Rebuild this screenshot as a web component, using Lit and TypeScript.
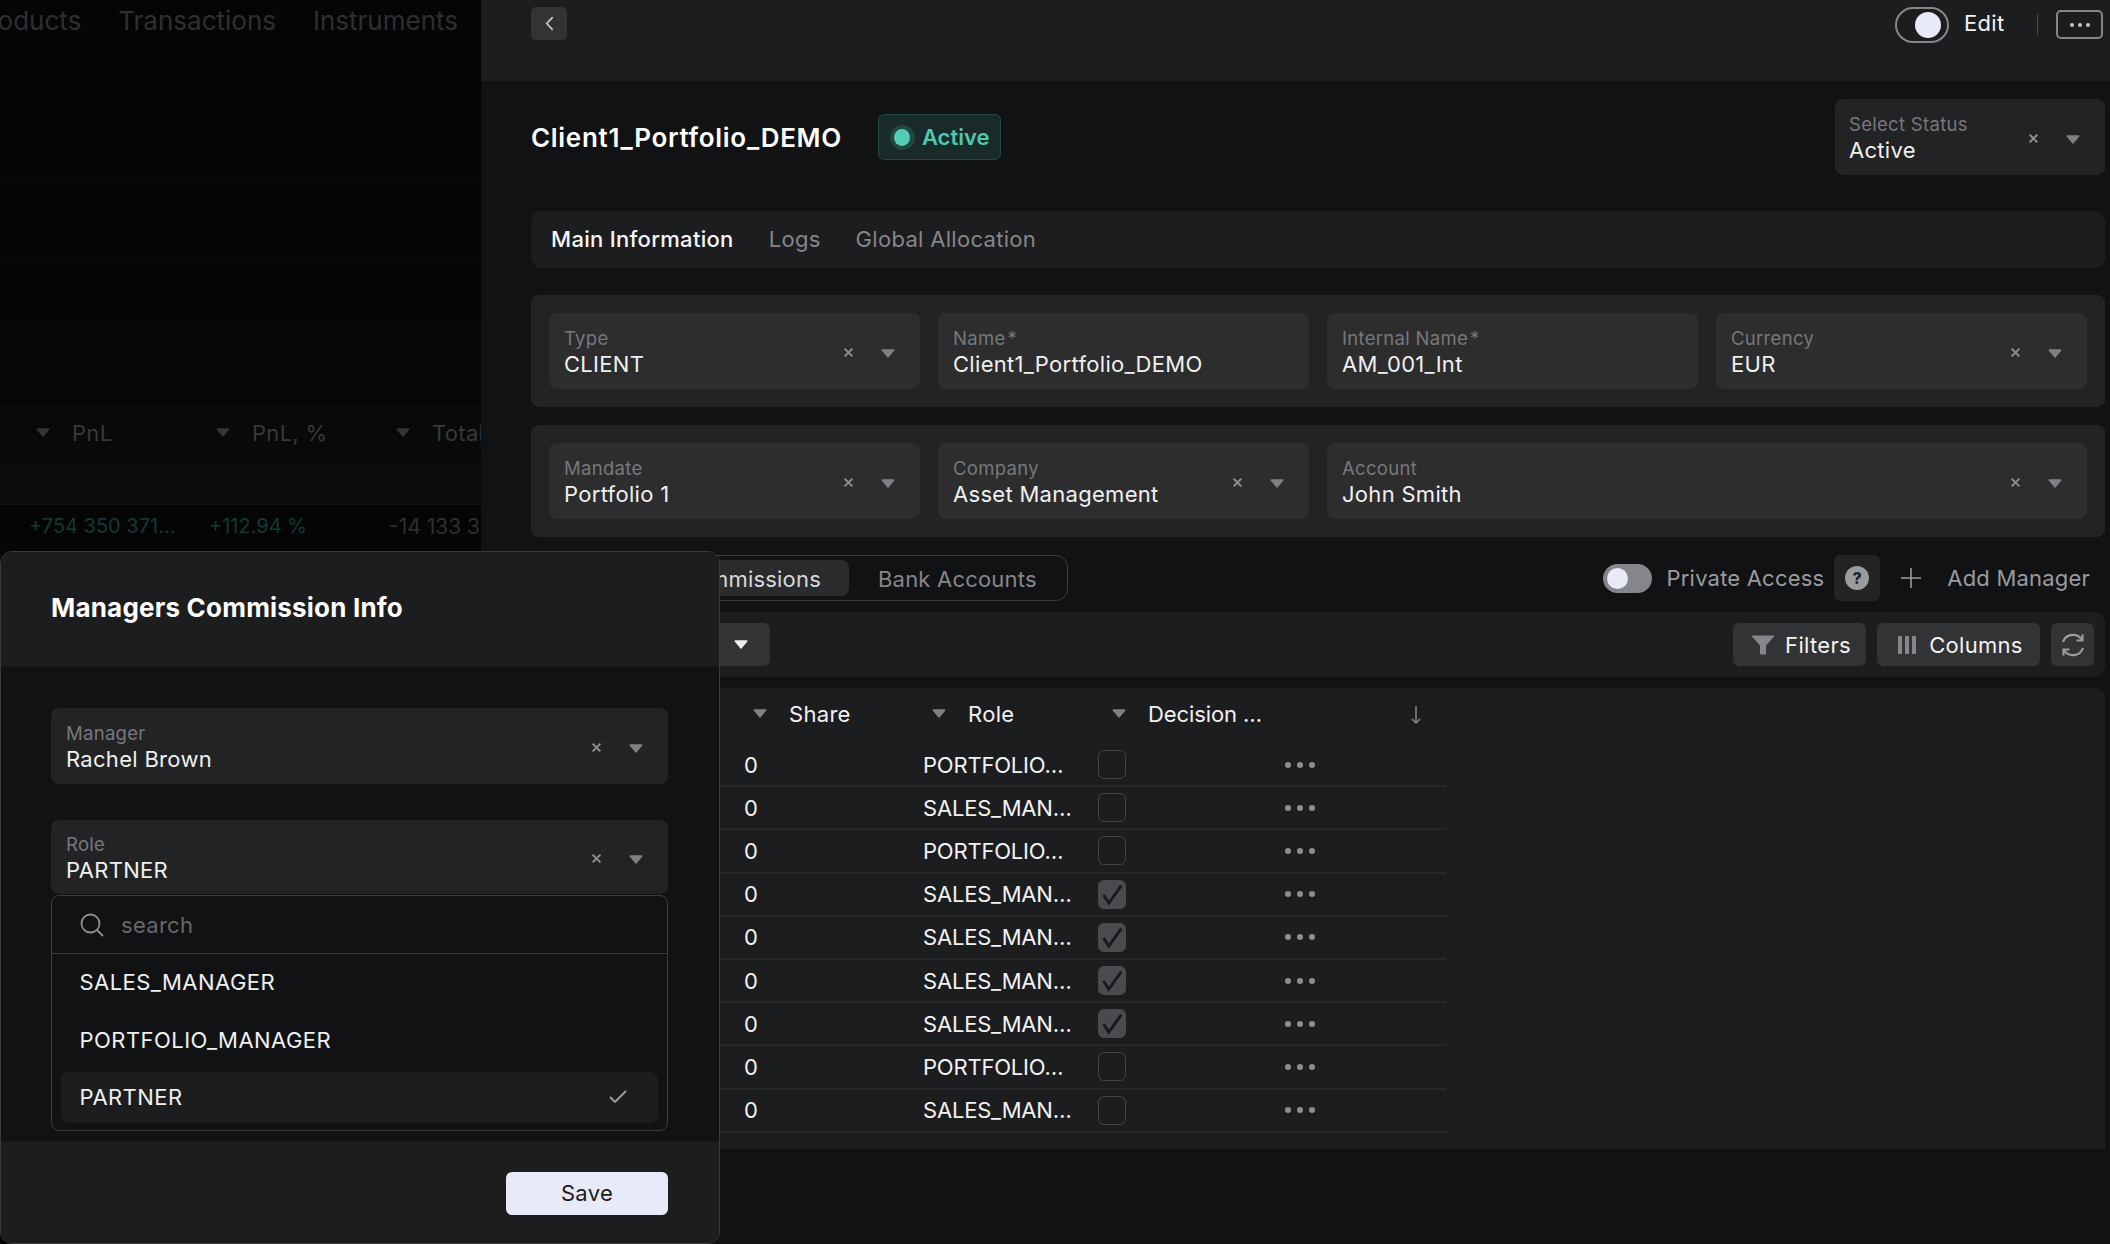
import { LitElement, css, html, nothing } from 'lit';
import { customElement } from 'lit/decorators.js';

const caret = (cls = '') => html`<svg class="caret ${cls}" viewBox="0 0 14 9"><path d="M1.2 1h11.6L7 8z" fill="currentColor" stroke="currentColor" stroke-width="1.4" stroke-linejoin="round"/></svg>`;
const clear = html`<svg class="clear" viewBox="0 0 10 10"><path d="M1.500 1.500l7 7M8.500 1.500l-7 7" stroke="currentColor" stroke-width="1.800" fill="none"/></svg>`;

const rows = [
    ['PORTFOLIO…', false],
    ['SALES_MAN…', false],
    ['PORTFOLIO…', false],
    ['SALES_MAN…', true],
    ['SALES_MAN…', true],
    ['SALES_MAN…', true],
    ['SALES_MAN…', true],
    ['PORTFOLIO…', false],
    ['SALES_MAN…', false],
] as [string, boolean][];

@customElement('app-root')
export class AppRoot extends LitElement {
    field(label: string, value: string, select = true, cls = '') {
        return html`
      <div class="field ${cls}">
        <div class="field-text">
          <span class="field-label">${label}</span>
          <span class="field-value">${value}</span>
        </div>
        ${select ? html`<div class="field-icons">${clear}${caret()}</div>` : nothing}
      </div>
    `;
    }

    renderBackdrop() {
        return html`
      <aside class="backdrop">
        <nav class="back-nav"><span>Products</span><span>Transactions</span><span>Instruments</span></nav>
        <div class="back-band tall"></div>
        <div class="back-band mid"></div>
        <div class="back-band low"></div>
        <div class="back-head">
          <div class="back-col">${caret()}<span>PnL</span></div>
          <div class="back-col">${caret()}<span>PnL, %</span></div>
          <div class="back-col">${caret()}<span>Total</span></div>
        </div>
        <div class="back-gap"></div>
        <div class="back-row">
          <span class="green first">+754 350 371…</span>
          <span class="green second">+112.94 %</span>
          <span class="third">-14 133 3</span>
        </div>
      </aside>
    `;
    }

    renderTable() {
        return html`
      <section class="table">
        <div class="thead">
          <div class="th share">${caret()}<span>Share</span></div>
          <div class="th role">${caret()}<span>Role</span></div>
          <div class="th decision">${caret()}<span>Decision …</span></div>
          <svg class="sort" viewBox="0 0 12 20"><path d="M6 1v17M2 14l4 4 4-4" stroke="currentColor" stroke-width="1.500" fill="none"/></svg>
        </div>
        ${rows.map(([role, checked]) => html`
          <div class="tr">
            <span class="td-share">0</span>
            <span class="td-role">${role}</span>
            <span class="check ${checked ? 'on' : ''}">
              ${checked ? html`<svg viewBox="0 0 28 29"><path d="M5 15l5.500 9L24 5" stroke="#17181a" stroke-width="3" fill="none"/></svg>` : nothing}
            </span>
            <span class="dots"><i></i><i></i><i></i></span>
          </div>
        `)}
      </section>
    `;
    }

    renderPanel() {
        return html`
      <main class="panel">
        <header class="top">
          <button class="back-btn">
            <svg viewBox="0 0 12 18" width="11" height="17"><path d="M9.500 2L3 9l6.500 7" stroke="#c9cacd" stroke-width="1.800" fill="none"/></svg>
          </button>
          <div class="top-right">
            <span class="edit-toggle"><i></i></span>
            <span class="edit-label">Edit</span>
            <span class="divider"></span>
            <button class="more"><i></i><i></i><i></i></button>
          </div>
        </header>
        <div class="body">
          <div class="title-row">
            <h1>Client1_Portfolio_DEMO</h1>
            <span class="badge"><span class="halo"><i></i></span>Active</span>
            ${this.field('Select Status', 'Active', true, 'status')}
          </div>
          <div class="tabs">
            <span class="on">Main Information</span><span>Logs</span><span>Global Allocation</span>
          </div>
          <div class="form-section">
            ${this.field('Type', 'CLIENT')}
            ${this.field('Name\u200a*', 'Client1_Portfolio_DEMO', false)}
            ${this.field('Internal Name\u200a*', 'AM_001_Int', false)}
            ${this.field('Currency', 'EUR')}
          </div>
          <div class="form-section">
            ${this.field('Mandate', 'Portfolio 1')}
            ${this.field('Company', 'Asset Management')}
            ${this.field('Account', 'John Smith', true, 'wide')}
          </div>
          <div class="sub-row">
            <div class="pill-tabs">
              <span class="pill on">Commissions</span><span class="pill">Bank Accounts</span>
            </div>
            <div class="access">
              <span class="access-toggle"><i></i></span>
              <span class="access-label">Private Access</span>
              <button class="help"><span>?</span></button>
              <svg class="plus" viewBox="0 0 20 20"><path d="M10 0v20M0 10h20" stroke="currentColor" stroke-width="1.600"/></svg>
              <span class="add">Add Manager</span>
            </div>
          </div>
          <div class="toolbar">
            <button class="tool view-btn">${caret('bright')}</button>
            <button class="tool filters">
              <svg viewBox="0 0 24 20" width="24" height="20"><path d="M1 1h22l-8.500 9.500V19l-5 0v-8.500z" fill="#85868b" stroke="#85868b" stroke-linejoin="round"/></svg>
              Filters
            </button>
            <button class="tool columns">
              <svg viewBox="0 0 18 20" width="18" height="20"><path d="M0 1h4v18H0zM7 1h4v18H7zM14 1h4v18h-4z" fill="#85868b"/></svg>
              Columns
            </button>
            <button class="tool refresh">
              <svg viewBox="0 0 26 26" width="26" height="26" fill="none" stroke="#9c9da1" stroke-width="2.200"><path d="M3 10A10.500 10.500 0 0 1 22 8M23 16A10.500 10.500 0 0 1 4 18"/><path d="M22.500 2.500V8.500H16.500M3.500 23.500V17.500H9.500"/></svg>
            </button>
          </div>
          ${this.renderTable()}
        </div>
      </main>
    `;
    }

    renderModal() {
        return html`
      <div class="modal">
        <div class="modal-head">Managers Commission Info</div>
        <div class="modal-body">
          ${this.field('Manager', 'Rachel Brown', true, 'dim')}
          ${this.field('Role', 'PARTNER', true, 'dim role-field')}
          <div class="dropdown">
            <div class="search">
              <svg viewBox="0 0 24 24" width="24" height="24" fill="none" stroke="#8e8f93" stroke-width="1.800"><circle cx="10.500" cy="10.500" r="9"/><path d="M17 17l6 6"/></svg>
              <span>search</span>
            </div>
            <div class="option">SALES_MANAGER</div>
            <div class="option">PORTFOLIO_MANAGER</div>
            <div class="option picked">
              PARTNER
              <svg viewBox="0 0 18 14" width="18" height="14"><path d="M1 7l5 5L17 1" stroke="#a0a1a5" stroke-width="1.800" fill="none"/></svg>
            </div>
          </div>
        </div>
        <div class="modal-foot"><button class="save">Save</button></div>
      </div>
    `;
    }

    render() {
        return html`${this.renderBackdrop()}${this.renderPanel()}${this.renderModal()}`;
    }

    static styles = css`
    :host {
      display: flex;
      position: relative;
      width: 2110px;
      height: 1244px;
      overflow: hidden;
      background: #111213;
      color: #f2f2f3;
      font-family: Inter, 'Noto Sans', sans-serif;
      font-size: 22px;
      letter-spacing: 0.3px;
    }

    button {
      font: inherit;
      letter-spacing: inherit;
      color: inherit;
      border: 0;
      padding: 0;
    }

    .caret {
      width: 14px;
      height: 9px;
      color: #7f8084;
      flex: none;
    }

    .caret.bright {
      color: #eceded;
    }

    .clear {
      width: 11px;
      height: 11px;
      color: #8e8f93;
      flex: none;
    }

    /* page behind the side panel */
    .backdrop {
      width: 481px;
      flex: none;
      overflow: hidden;
      background: #050505;
      color: #2e2f31;
      font-size: 26px;
      letter-spacing: 0;
    }

    .back-nav {
      display: flex;
      justify-content: flex-end;
      gap: 37px;
      height: 180px;
      padding: 5px 23px 0 0;
      white-space: nowrap;
      box-sizing: border-box;
    }

    .back-nav span {
      flex: none;
    }

    .back-band {
      box-sizing: border-box;
      border-top: 1px solid #070707;
    }

    .back-band.tall {
      height: 78px;
    }

    .back-band.mid {
      height: 64px;
    }

    .back-band.low {
      height: 83px;
      background: #060606;
    }

    .back-head {
      display: flex;
      height: 57px;
      box-sizing: border-box;
      align-items: center;
      padding: 0 0 2px 36px;
      background: #090909;
      font-size: 22px;
      letter-spacing: 0.3px;
      color: #38393b;
    }

    .back-head .caret {
      color: #333436;
    }

    .back-col {
      display: flex;
      align-items: center;
      gap: 22px;
      width: 180px;
      flex: none;
      white-space: nowrap;
    }

    .back-gap {
      height: 42px;
      background: #0c0c0d;
    }

    .back-row {
      display: flex;
      height: 42px;
      align-items: center;
      border-top: 1px solid #111;
      font-size: 20px;
      white-space: nowrap;
    }

    .back-row .green {
      color: #123a33;
    }

    .back-row .first {
      margin-left: 29px;
      width: 180px;
      flex: none;
    }

    .back-row .second {
      width: 180px;
      flex: none;
    }

    .back-row .third {
      font-size: 21px;
    }

    /* side panel */
    .panel {
      flex: 1;
      min-width: 0;
      display: flex;
      flex-direction: column;
    }

    .top {
      height: 81px;
      flex: none;
      box-sizing: border-box;
      padding: 7px 7px 0 50px;
      background: #1c1d1f;
      display: flex;
      justify-content: space-between;
      align-items: flex-start;
    }

    .back-btn {
      width: 36px;
      height: 33px;
      border-radius: 5px;
      background: #323335;
      display: flex;
      align-items: center;
      justify-content: center;
    }

    .top-right {
      display: flex;
      align-items: center;
      height: 35px;
    }

    .edit-toggle {
      width: 54px;
      height: 36px;
      box-sizing: border-box;
      border: 2px solid #85868b;
      border-radius: 18px;
      display: flex;
      align-items: center;
      justify-content: flex-end;
      padding-right: 6px;
    }

    .edit-toggle i {
      width: 26px;
      height: 26px;
      border-radius: 50%;
      background: #e8eaf8;
    }

    .edit-label {
      margin-left: 15px;
      width: 73px;
      padding-bottom: 3px;
    }

    .divider {
      width: 1px;
      height: 21px;
      background: #4a4b4e;
      margin-right: 18px;
    }

    .more {
      width: 47px;
      height: 29px;
      box-sizing: border-box;
      border: 2px solid #85868b;
      border-radius: 5px;
      background: none;
      display: flex;
      align-items: center;
      justify-content: center;
      gap: 4px;
    }

    .more i {
      width: 4px;
      height: 4px;
      border-radius: 50%;
      background: #c4c5c8;
    }

    .body {
      padding: 18px 5px 0 50px;
      display: flex;
      flex-direction: column;
    }

    .title-row {
      display: flex;
      align-items: center;
      height: 76px;
    }

    h1 {
      margin: 0;
      font-size: 26px;
      font-weight: 600;
      letter-spacing: 0.7px;
      color: #fff;
    }

    .badge {
      margin-left: 36px;
      height: 46px;
      width: 123px;
      box-sizing: border-box;
      border: 1px solid #21473f;
      border-radius: 6px;
      background: #192b29;
      color: #4fc8b0;
      font-weight: 600;
      letter-spacing: 0;
      display: flex;
      align-items: center;
      gap: 7px;
      padding-left: 11px;
    }

    .halo {
      width: 25px;
      height: 25px;
      border-radius: 50%;
      background: #234640;
      display: flex;
      align-items: center;
      justify-content: center;
    }

    .halo i {
      width: 16px;
      height: 17px;
      border-radius: 50%;
      background: #55cdb5;
    }

    .field {
      height: 76px;
      box-sizing: border-box;
      padding: 2px 15px 0;
      border-radius: 8px;
      background: #2d2d2e;
      display: flex;
      align-items: center;
      justify-content: space-between;
      min-width: 0;
    }

    .field-text {
      display: flex;
      flex-direction: column;
      gap: 2px;
      white-space: nowrap;
    }

    .field-label {
      font-size: 18.5px;
      line-height: 22px;
      color: #77787c;
    }

    .field-value {
      line-height: 26px;
      color: #f0f0f1;
    }

    .field-icons {
      display: flex;
      align-items: center;
      gap: 27px;
      padding: 3px 10px 0 0;
    }

    .field-icons .clear {
      margin-top: -3px;
    }

    .field.status {
      margin-left: auto;
      width: 270px;
      padding-left: 14px;
      background: #222324;
    }

    .form-section {
      display: grid;
      grid-template-columns: repeat(4, 1fr);
      gap: 18px;
      padding: 18px;
      background: #222324;
      border-radius: 8px;
      margin-bottom: 18px;
    }

    .field.wide {
      grid-column: span 2;
    }

    .tabs {
      margin-top: 36px;
      margin-bottom: 27px;
      height: 57px;
      box-sizing: border-box;
      padding: 0 0 2px 20px;
      background: #1c1d1f;
      border-radius: 10px;
      display: flex;
      align-items: center;
      gap: 35px;
      color: #85868a;
    }

    .tabs .on {
      color: #f6f6f7;
      font-weight: 500;
    }

    .sub-row {
      display: flex;
      justify-content: space-between;
      align-items: center;
      height: 46px;
    }

    .pill-tabs {
      width: 537px;
      height: 46px;
      box-sizing: border-box;
      border: 1px solid #3b3c3f;
      border-radius: 12px;
      display: flex;
      align-items: center;
      padding: 0 4px;
      letter-spacing: 0.2px;
    }

    .pill {
      height: 36px;
      box-sizing: border-box;
      padding: 1px 0 0 29px;
      display: flex;
      align-items: center;
      justify-content: flex-end;
      color: #85868a;
      white-space: nowrap;
    }

    .pill.on {
      width: 313px;
      padding: 1px 28px 0 0;
      border-radius: 8px;
      background: #2a2b2c;
      color: #d8d9da;
    }

    .access {
      display: flex;
      align-items: center;
      height: 46px;
      padding-right: 15px;
      color: #9a9b9f;
      letter-spacing: 0.2px;
    }

    .access-toggle {
      width: 49px;
      height: 29px;
      border-radius: 15px;
      background: #85868b;
      display: flex;
      align-items: center;
      padding-left: 4px;
      box-sizing: border-box;
    }

    .access-toggle i {
      width: 21px;
      height: 21px;
      border-radius: 50%;
      background: #e8eaf8;
    }

    .access-label {
      margin: 0 10px 0 15px;
    }

    .help {
      width: 46px;
      height: 46px;
      border-radius: 6px;
      background: #242425;
      display: flex;
      align-items: center;
      justify-content: center;
    }

    .help span {
      width: 24px;
      height: 24px;
      border-radius: 50%;
      background: #9a9b9f;
      color: #242425;
      font-size: 16px;
      font-weight: 800;
      line-height: 24px;
      text-align: center;
    }

    .plus {
      width: 20px;
      height: 20px;
      margin: 0 26px 0 21px;
    }

    .toolbar {
      margin-top: 11px;
      height: 65px;
      box-sizing: border-box;
      background: #1c1d1f;
      border-radius: 10px;
      padding: 11px 11px;
      display: flex;
      gap: 11px;
    }

    .tool {
      height: 43px;
      box-sizing: border-box;
      border-radius: 6px;
      background: #323335;
      display: flex;
      align-items: center;
      justify-content: center;
      gap: 13px;
    }

    .view-btn {
      width: 228px;
      margin-right: auto;
      justify-content: flex-end;
      padding-right: 22px;
    }

    .filters {
      width: 133px;
      gap: 10px;
      padding-left: 3px;
    }

    .columns {
      width: 163px;
      padding-left: 4px;
    }

    .refresh {
      width: 43px;
    }

    .table {
      margin-top: 11px;
      height: 461px;
      background: #1c1d1f;
      border-radius: 10px 10px 0 0;
    }

    .thead {
      height: 56px;
      box-sizing: border-box;
      padding: 0 0 5px 222px;
      display: flex;
      align-items: center;
    }

    .th {
      display: flex;
      align-items: center;
      gap: 22px;
      flex: none;
    }

    .th.share {
      width: 179px;
    }

    .th.role {
      width: 180px;
    }

    .th.decision {
      width: 298px;
      letter-spacing: -0.1px;
    }

    .sort {
      width: 12px;
      height: 20px;
      color: #85868b;
      margin-top: 3px;
    }

    .tr {
      width: 915px;
      height: 43.2px;
      box-sizing: border-box;
      border-bottom: 2px solid #27282a;
      display: grid;
      grid-template-columns: 213px 179px 175px 187px 30px;
      align-items: center;
    }

    .td-share {
      grid-column: 2;
    }

    .td-role {
      letter-spacing: -0.2px;
    }

    .check {
      width: 28px;
      height: 29px;
      box-sizing: border-box;
      border: 1px solid #434447;
      border-radius: 6px;
    }

    .check.on {
      border-color: #4a4b4f;
      background: #4a4b4f;
    }

    .check svg {
      display: block;
      width: 26px;
      height: 27px;
    }

    .dots {
      display: flex;
      justify-content: space-between;
    }

    .dots i {
      width: 6px;
      height: 6px;
      border-radius: 50%;
      background: #8e8f93;
    }

    /* commission dialog, laid over the page */
    .modal {
      position: absolute;
      left: 0;
      top: 551px;
      width: 720px;
      height: 693px;
      box-sizing: border-box;
      border: 1px solid #3a3b3e;
      border-radius: 12px;
      overflow: hidden;
      background: #111213;
      display: flex;
      flex-direction: column;
    }

    .modal-head {
      height: 115px;
      flex: none;
      box-sizing: border-box;
      padding: 0 50px 4px;
      background: #1c1d1f;
      display: flex;
      align-items: center;
      font-size: 26px;
      font-weight: 700;
      letter-spacing: 0.2px;
      color: #fff;
    }

    .modal-body {
      flex: 1;
      padding: 41px 51px 0 50px;
      display: flex;
      flex-direction: column;
    }

    .field.dim {
      background: #222324;
      margin-bottom: 36px;
    }

    .field.role-field {
      height: 74px;
      margin-bottom: 1px;
    }

    .dropdown {
      height: 236px;
      box-sizing: border-box;
      border: 1px solid #3a3b3e;
      border-radius: 8px;
    }

    .search {
      height: 58px;
      box-sizing: border-box;
      padding-left: 28px;
      border-bottom: 1px solid #3a3b3e;
      display: flex;
      align-items: center;
      gap: 17px;
      color: #66676b;
    }

    .option {
      height: 58px;
      box-sizing: border-box;
      margin: 0 9px;
      padding: 0 31px 2px 18.5px;
      display: flex;
      align-items: center;
      justify-content: space-between;
      color: #f0f0f1;
      letter-spacing: 0.45px;
    }

    .option.picked {
      height: 51px;
      margin-top: 2px;
      background: #1c1d1f;
      border-radius: 8px;
    }

    .modal-foot {
      height: 102px;
      flex: none;
      box-sizing: border-box;
      padding: 31px 51px 0;
      background: #1c1d1f;
      display: flex;
      justify-content: flex-end;
      align-items: flex-start;
    }

    .save {
      width: 162px;
      height: 43px;
      padding-bottom: 2px;
      border-radius: 6px;
      background: #e8eaf8;
      color: #1a1b1d;
    }
  `;
}

declare global {
    interface HTMLElementTagNameMap {
        'app-root': AppRoot;
    }
}
